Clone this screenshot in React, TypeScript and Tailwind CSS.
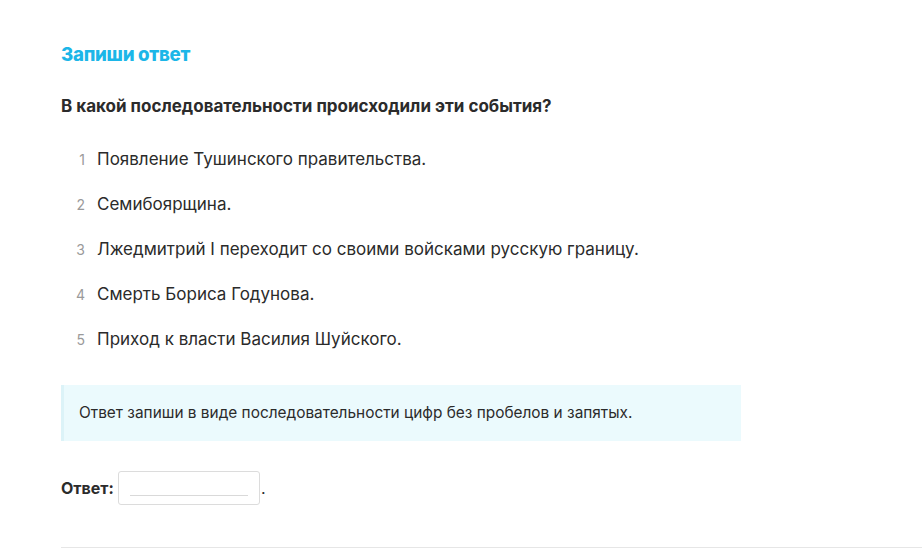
import React from "react";

const items = [
  "Появление Тушинского правительства.",
  "Семибоярщина.",
  "Лжедмитрий I переходит со своими войсками русскую границу.",
  "Смерть Бориса Годунова.",
  "Приход к власти Василия Шуйского.",
];

export default function App() {
  return (
    <div className="min-h-[560px] w-[922px] bg-white" style={{ fontFamily: "Inter, 'Noto Sans', sans-serif" }}>
      <div className="pl-[61px] pr-0 pt-[43px]">
        <h2 className="text-[18.7px] leading-[24px] font-extrabold text-[#1cb6e8] tracking-[-0.3px]">Запиши ответ</h2>
        <p className="mt-[27px] text-[17px] leading-[24px] font-bold text-[#2b2b2b]">
          В какой последовательности происходили эти события?
        </p>
        <ol className="mt-[29px] flex flex-col gap-[21px]">
          {items.map((t, i) => (
            <li key={i} className="flex items-baseline">
              <span className="w-[36px] pr-[12px] text-right text-[14px] text-[#9a9a9a]">{i + 1}</span>
              <span className="text-[17px] leading-[24px] text-[#2b2b2b]">{t}</span>
            </li>
          ))}
        </ol>
        <div className="mt-[34px] w-[680px] h-[56px] flex items-center border-l-[3px] border-[#dcf3f8] bg-[#ebfafd] pl-[15px]">
          <span className="text-[15.4px] text-[#2b2b2b]">Ответ запиши в виде последовательности цифр без пробелов и запятых.</span>
        </div>
        <div className="mt-[30px] flex items-center">
          <span className="text-[16px] font-bold text-[#2b2b2b]">Ответ:</span>
          <div className="ml-[4px] w-[142px] h-[34px] rounded-[3px] border border-[#dcdcdc] bg-white flex items-end px-[11px] pb-[8px]">
            <div className="h-px w-full bg-[#d9d9d9]" />
          </div>
          <span className="ml-[1px] text-[16px] text-[#2b2b2b]">.</span>
        </div>
        <div className="mt-[42px] h-px w-full bg-[#e6e6e6]" />
      </div>
    </div>
  );
}
